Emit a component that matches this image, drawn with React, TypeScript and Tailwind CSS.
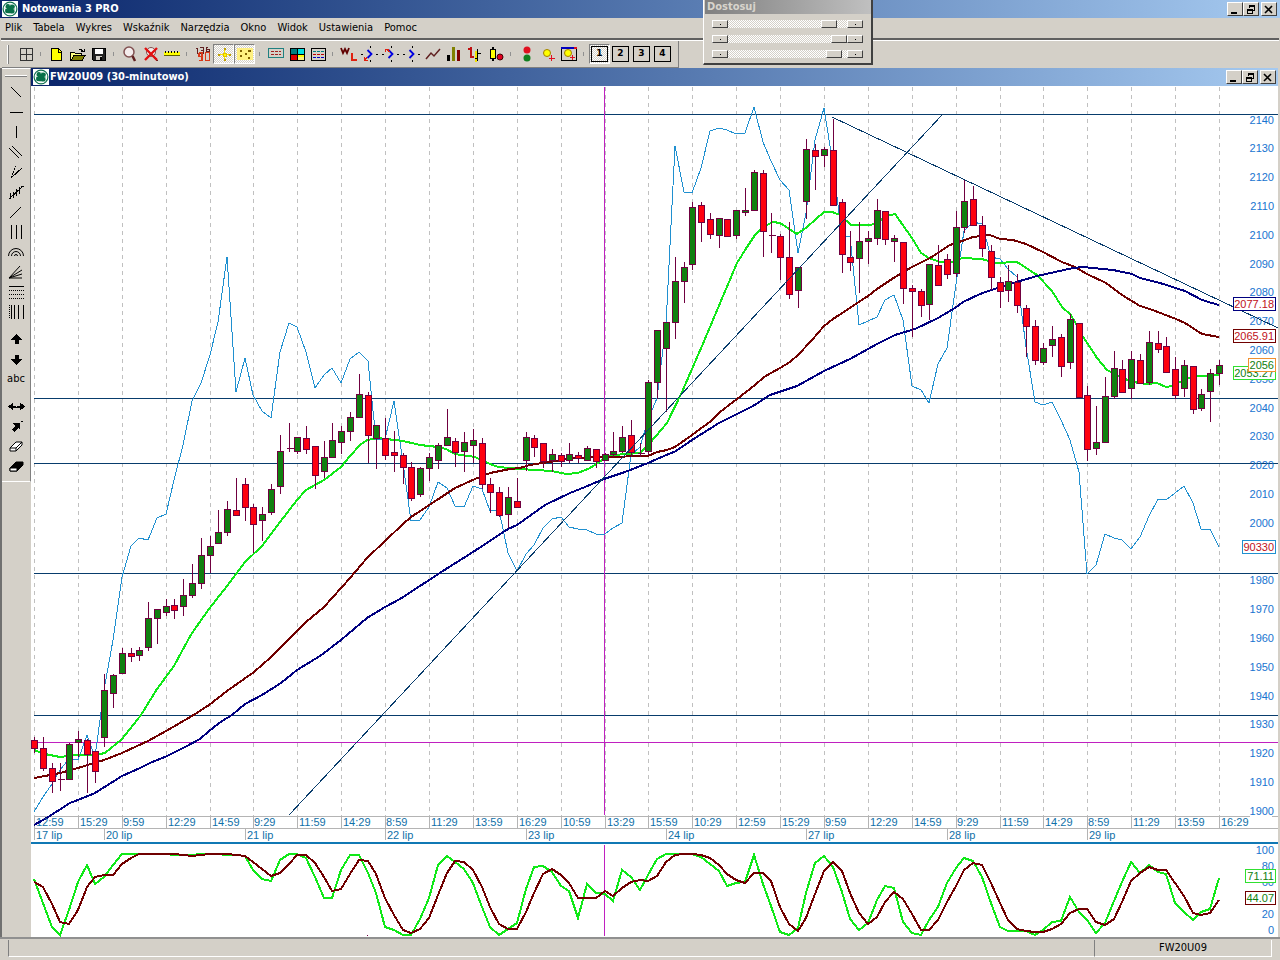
import type { ReactNode } from 'react';

const UI = "font-['DejaVu_Sans_Condensed','DejaVu_Sans','Liberation_Sans',sans-serif]";

const MENU = ['Plik', 'Tabela', 'Wykres', 'Wskaźnik', 'Narzędzia', 'Okno', 'Widok', 'Ustawienia', 'Pomoc'];

/* ---------- chart data ---------- */

const STEP = 1185 / 135;
const px = (i: number) => Math.round(34 + i * STEP);

// high, body top, body bottom, low, direction (1 up, 0 down)
const CANDLES: number[][] = [
  [737, 740, 748, 753, 0], [737, 748, 768, 771, 0], [763, 768, 781, 793, 0], [763, 779, 779, 791, 0], [743, 744, 779, 779, 1],
  [731, 739, 742, 757, 1], [739, 740, 754, 793, 0], [751, 751, 771, 783, 0], [674, 690, 737, 747, 1], [674, 675, 693, 708, 1],
  [648, 653, 673, 673, 1], [648, 653, 656, 662, 0], [647, 650, 655, 661, 1], [602, 618, 647, 651, 1], [609, 609, 618, 644, 1],
  [599, 606, 612, 616, 1], [599, 605, 610, 619, 0], [579, 595, 606, 616, 1], [564, 583, 595, 598, 1], [538, 555, 583, 589, 1],
  [536, 546, 555, 573, 1], [510, 532, 543, 543, 1], [501, 509, 532, 536, 1], [478, 510, 515, 515, 0], [478, 484, 507, 521, 0],
  [504, 507, 524, 553, 0], [507, 514, 520, 541, 1], [484, 489, 512, 515, 1], [435, 451, 486, 494, 1], [423, 448, 448, 452, 0],
  [437, 437, 451, 454, 1], [426, 438, 449, 454, 0], [446, 446, 475, 489, 0], [441, 457, 471, 478, 1], [423, 440, 457, 457, 1],
  [426, 431, 442, 454, 1], [412, 417, 431, 441, 1], [374, 394, 417, 417, 1], [392, 395, 435, 463, 0], [425, 425, 438, 469, 1],
  [418, 438, 455, 460, 0], [431, 452, 455, 472, 0], [453, 455, 467, 484, 0], [462, 467, 498, 501, 0], [467, 468, 494, 497, 1],
  [453, 457, 468, 481, 1], [443, 445, 460, 469, 1], [409, 437, 445, 445, 1], [438, 441, 452, 467, 0], [432, 442, 451, 472, 1],
  [429, 440, 445, 463, 1], [438, 443, 484, 489, 0], [478, 484, 492, 513, 0], [487, 492, 515, 517, 0], [487, 497, 514, 528, 1],
  [478, 501, 507, 507, 0], [432, 437, 460, 471, 1], [435, 438, 447, 457, 0], [443, 443, 461, 468, 0], [449, 454, 460, 472, 1],
  [453, 455, 461, 467, 0], [443, 454, 460, 463, 1], [452, 455, 458, 463, 0], [446, 448, 460, 460, 1], [449, 449, 461, 468, 0],
  [453, 454, 460, 461, 1], [432, 451, 454, 457, 1], [426, 437, 451, 453, 1], [420, 435, 452, 457, 0], [443, 453, 453, 457, 0],
  [380, 382, 451, 455, 1], [330, 330, 382, 399, 1], [322, 322, 348, 412, 1], [257, 281, 322, 339, 1], [262, 267, 281, 303, 1],
  [202, 207, 264, 270, 1], [202, 205, 222, 242, 0], [213, 219, 234, 239, 0], [218, 218, 235, 248, 1], [219, 219, 236, 236, 0],
  [210, 210, 235, 239, 1], [188, 210, 212, 216, 1], [170, 172, 210, 210, 1], [170, 173, 231, 257, 0], [213, 235, 235, 253, 0],
  [234, 236, 257, 280, 0], [222, 257, 294, 299, 0], [267, 267, 290, 308, 1], [139, 149, 201, 219, 1], [144, 150, 156, 190, 0],
  [147, 149, 155, 167, 1], [119, 150, 205, 205, 0], [199, 202, 254, 273, 0], [231, 257, 262, 271, 0], [222, 241, 258, 293, 1],
  [231, 238, 241, 264, 1], [199, 210, 238, 245, 1], [211, 211, 239, 245, 0], [235, 238, 241, 262, 1], [242, 242, 288, 304, 0],
  [285, 288, 291, 337, 0], [289, 291, 305, 317, 0], [264, 264, 304, 320, 1], [245, 265, 285, 285, 0], [254, 259, 274, 279, 0],
  [211, 227, 273, 277, 1], [179, 201, 227, 233, 1], [186, 199, 225, 225, 0], [216, 225, 248, 257, 0], [245, 251, 277, 290, 0],
  [277, 282, 291, 308, 0], [265, 281, 290, 302, 1], [274, 282, 305, 313, 0], [305, 308, 326, 357, 0], [320, 326, 360, 365, 0],
  [343, 348, 362, 365, 1], [326, 339, 345, 357, 1], [334, 337, 366, 377, 0], [314, 319, 362, 369, 1], [323, 323, 397, 397, 0],
  [386, 395, 449, 461, 0], [406, 442, 448, 455, 1], [377, 396, 442, 442, 1], [351, 368, 396, 399, 1], [360, 369, 392, 392, 0],
  [351, 359, 388, 399, 1], [354, 360, 383, 383, 0], [331, 342, 382, 385, 1], [331, 343, 349, 353, 0], [337, 346, 372, 372, 0],
  [357, 369, 395, 399, 0], [360, 365, 388, 397, 1], [366, 366, 409, 414, 0], [389, 394, 408, 411, 1], [369, 373, 391, 422, 1],
  [360, 365, 373, 385, 1],
];

const OPEN_INTEREST = [
  812, 797, 784, 770, 759, 760, 735, 757, 690, 640, 577, 546, 538, 540, 518, 514, 480, 445, 401, 383, 355, 322, 257, 392, 358,
  395, 411, 418, 352, 323, 327, 352, 388, 375, 368, 383, 359, 352, 361, 440, 439, 401, 463, 521, 520, 507, 482, 488, 506, 507,
  486, 489, 511, 510, 553, 571, 554, 545, 528, 519, 517, 527, 529, 530, 534, 534, 528, 523, 455, 447, 420, 398, 325, 146, 192,
  193, 168, 131, 128, 130, 134, 133, 107, 142, 161, 180, 190, 253, 213, 140, 108, 165, 237, 236, 325, 321, 317, 300, 295, 320,
  386, 390, 403, 364, 348, 284, 231, 222, 224, 257, 259, 269, 277, 347, 402, 405, 402, 420, 440, 472, 574, 565, 534, 538, 540,
  549, 537, 516, 499, 500, 493, 486, 503, 529, 529, 547,
];

const STOCH_FAST = [
  879, 903, 927, 935, 910, 882, 865, 884, 877, 865, 854, 854, 854, 854, 854, 854, 855, 855, 855, 854, 854, 854, 855, 855, 856,
  870, 879, 881, 860, 854, 854, 858, 877, 898, 898, 870, 855, 855, 873, 893, 927, 930, 935, 935, 919, 898, 865, 856, 862, 869,
  883, 907, 927, 935, 929, 923, 889, 867, 866, 872, 886, 891, 918, 884, 893, 894, 901, 870, 877, 890, 875, 859, 854, 854, 854,
  854, 857, 864, 871, 886, 883, 882, 855, 884, 906, 932, 935, 928, 893, 863, 856, 867, 892, 919, 930, 923, 900, 886, 888, 922,
  933, 935, 920, 907, 883, 868, 858, 861, 877, 903, 927, 931, 931, 931, 935, 930, 922, 921, 897, 912, 920, 933, 923, 901, 882,
  862, 873, 865, 872, 874, 903, 912, 920, 912, 909, 878,
];

const STOCH_SLOW = [
  882, 887, 904, 922, 924, 910, 887, 877, 875, 875, 864, 858, 854, 854, 854, 854, 854, 855, 856, 855, 854, 854, 854, 855, 856,
  862, 869, 876, 873, 864, 855, 855, 863, 877, 891, 889, 874, 860, 861, 874, 898, 915, 930, 933, 929, 918, 895, 873, 861, 862,
  870, 887, 907, 924, 929, 929, 912, 893, 874, 869, 875, 883, 898, 898, 898, 891, 896, 888, 882, 880, 881, 876, 862, 855, 854,
  854, 855, 858, 865, 874, 880, 883, 873, 873, 881, 907, 924, 931, 918, 894, 871, 862, 871, 893, 913, 924, 917, 902, 892, 899,
  914, 930, 930, 920, 902, 886, 870, 863, 865, 883, 903, 920, 929, 931, 932, 932, 929, 924, 913, 909, 909, 922, 925, 919, 902,
  881, 873, 867, 870, 870, 883, 896, 913, 915, 913, 900,
];

const MA_SHORT =
  '34,750 45,754 60,757 75,755 95,755 105,753 122,739 141,715 157,689 174,666 188,640 192,633 209,609 227,586 245,562 262,546 280,522 297,500 306,490 324,480 341,467 350,456 360,445 367,440 378,438 403,441 420,445 438,447 446,449 455,454 475,457 490,464 498,467 520,469 535,470 552,471 566,474 578,473 590,468 604,459 613,455 640,453 650,443 667,423 682,392 702,346 718,308 737,263 747,247 755,235 763,227 773,222 780,223 797,234 807,227 824,212 832,212 840,215 851,225 870,225 877,223 886,216 895,214 912,238 921,253 929,258 940,262 953,262 962,258 982,259 995,263 1017,262 1037,275 1052,291 1062,307 1071,315 1082,335 1097,358 1107,370 1120,377 1133,382 1147,384 1157,383 1166,387 1173,386 1187,378 1200,376 1219,375';
const MA_MID =
  '34,778 45,776 60,773 78,768 104,760 122,753 148,741 166,731 192,716 209,705 227,691 254,672 270,658 288,640 306,622 324,607 350,578 367,558 385,541 403,524 411,517 440,498 455,488 475,479 490,473 510,469 520,468 530,465 555,461 575,458 604,457 648,456 657,452 667,450 675,447 692,435 711,421 720,412 737,399 755,385 764,377 780,368 790,362 798,355 812,340 824,326 833,319 868,296 877,289 895,277 912,267 930,258 950,245 962,241 973,237 990,235 1000,239 1013,240 1026,244 1043,252 1062,262 1075,267 1087,274 1106,283 1122,295 1140,306 1150,309 1176,319 1185,323 1202,334 1219,337';
const MA_LONG =
  '34,825 45,819 70,803 78,800 95,793 122,776 140,768 150,763 167,756 187,746 200,739 209,731 222,721 232,715 245,704 262,695 281,683 297,670 320,656 341,640 367,618 385,607 400,599 446,569 473,552 508,529 517,525 545,505 570,493 585,487 604,479 625,472 648,463 657,459 676,451 692,440 719,423 737,414 753,406 770,395 797,386 824,371 850,359 877,344 895,335 915,329 938,318 955,308 963,302 980,294 1000,287 1020,281 1037,276 1073,268 1083,267 1093,268 1113,270 1132,274 1140,278 1160,283 1185,291 1202,300 1212,303 1219,305';

const TIMES = [
  '12:59', '15:29', '9:59', '12:29', '14:59', '9:29', '11:59', '14:29', '8:59', '11:29', '13:59', '16:29', '10:59', '13:29',
  '15:59', '10:29', '12:59', '15:29', '9:59', '12:29', '14:59', '9:29', '11:59', '14:29', '8:59', '11:29', '13:59', '16:29',
];
const DAYS: [number, string][] = [
  [0, '17 lip'], [8, '20 lip'], [24, '21 lip'], [40, '22 lip'], [56, '23 lip'], [72, '24 lip'], [88, '27 lip'], [104, '28 lip'], [120, '29 lip'],
];
const PRICES = Array.from({ length: 25 }, (_, i) => 2140 - i * 10).filter((p) => p !== 1990);
const LEVELS = [114, 398, 463, 573, 715];

const series = (ys: number[]) => ys.map((y, i) => `${px(i)},${y}`).join(' ');

function Tag({ x, y, w, stroke, fill, children }: { x: number; y: number; w: number; stroke: string; fill: string; children: string }) {
  return (
    <g>
      <rect x={x + 0.5} y={y + 0.5} width={w} height={13} fill="#fff" stroke={stroke} shapeRendering="crispEdges" />
      <text x={x + w - 1} y={y + 11} fill={fill} textAnchor="end">{children}</text>
    </g>
  );
}

function PriceChart() {
  return (
    <svg viewBox="31 86 1247 756" className="block h-auto w-full bg-white font-['Liberation_Sans',sans-serif] text-[11px]" role="img" aria-label="FW20U09">
      <g shapeRendering="crispEdges" fill="none">
        {TIMES.map((_, k) => (
          <path key={k} d={`M${px(k * 5) + 0.5} 87V816`} stroke="#c0c0c0" strokeDasharray="4 4" />
        ))}
        <path d="M34 816.5H1250M1272 816.5H1278M34 828.5H1278" stroke="#b4b4b4" />
        {TIMES.map((_, k) => (
          <path key={k} d={`M${px(k * 5) + 0.5} 816V828`} stroke="#b4b4b4" />
        ))}
        {DAYS.map(([i]) => (
          <path key={i} d={`M${px(i) + 0.5} 828V840`} stroke="#b4b4b4" />
        ))}
        {LEVELS.map((y) => (
          <path key={y} d={`M34 ${y + 0.5}H1278`} stroke="#083c6c" />
        ))}
        <path d="M34 742.5H1278M604.5 87V815" stroke="#c020c0" />
        <polyline points={series(OPEN_INTEREST)} stroke="#2090d0" />
      </g>
      <g fill="#1874d0" textAnchor="end">
        {PRICES.map((p) => (
          <text key={p} x={1274} y={Math.round(123.5 + (2140 - p) * 2.88)}>{p}</text>
        ))}
      </g>
      <g shapeRendering="crispEdges" fill="none">
        <polyline points={MA_SHORT} stroke="#10e818" strokeWidth={2} />
        <polyline points={MA_MID} stroke="#700000" strokeWidth={2} />
        <polyline points={MA_LONG} stroke="#000080" strokeWidth={2} />
      </g>
      <g shapeRendering="crispEdges" stroke="#700040">
        {CANDLES.map(([hi, top, bottom, lo, up], i) => {
          const x = px(i) + 0.5;
          return (
            <g key={i}>
              <path d={`M${x} ${hi}V${lo}`} />
              {top === bottom ? (
                <path d={`M${x - 3} ${top + 0.5}H${x + 4}`} />
              ) : (
                <rect x={x - 3} y={top + 0.5} width={6} height={bottom - top} fill={up ? '#108010' : '#ff0010'} />
              )}
            </g>
          );
        })}
      </g>
      <path d="M289 815L942 115M832 117L1278 328" fill="none" stroke="#083c6c" shapeRendering="crispEdges" />
      <g fill="#1070a8">
        {TIMES.map((t, k) => (
          <text key={k} x={px(k * 5) + (t.length > 4 ? 2 : 1)} y={826}>{t}</text>
        ))}
        {DAYS.map(([i, d]) => (
          <text key={i} x={px(i) + 2} y={839}>{d}</text>
        ))}
      </g>
      <path d="M34 825L45 819" stroke="#000080" strokeWidth={2} shapeRendering="crispEdges" />
      <Tag x={1233} y={297} w={42} stroke="#000080" fill="#c01020">2077.18</Tag>
      <Tag x={1233} y={329} w={42} stroke="#700000" fill="#c01020">2065.91</Tag>
      <Tag x={1233} y={366} w={42} stroke="#30e030" fill="#108010">2053.27</Tag>
      <Tag x={1248} y={358} w={27} stroke="#f09030" fill="#108010">2056</Tag>
      <Tag x={1242} y={540} w={33} stroke="#2090d0" fill="#c01020">90330</Tag>
    </svg>
  );
}

function StochasticChart() {
  return (
    <svg viewBox="31 844 1247 93" className="block h-auto w-full bg-white font-['Liberation_Sans',sans-serif] text-[11px]" role="img" aria-label="Stochastic">
      <g fill="#1874d0" textAnchor="end">
        <text x={1274} y={854}>100</text>
        <text x={1274} y={870}>80</text>
        <text x={1274} y={886}>60</text>
        <text x={1274} y={918}>20</text>
        <text x={1274} y={934}>0</text>
      </g>
      <g fill="none" shapeRendering="crispEdges">
        <path d="M604.5 845V936" stroke="#c020c0" />
        <path d="M367 935.5h1" stroke="#700040" />
        <polyline points={series(STOCH_FAST)} stroke="#10e818" strokeWidth={2} />
        <polyline points={series(STOCH_SLOW)} stroke="#700000" strokeWidth={2} />
      </g>
      <Tag x={1245} y={869} w={30} stroke="#30e030" fill="#108010">71.11</Tag>
      <Tag x={1245} y={891} w={30} stroke="#700000" fill="#108010">44.07</Tag>
    </svg>
  );
}

/* ---------- icons ---------- */

function Icon({ children, w = 18 }: { children: ReactNode; w?: number }) {
  return (
    <svg width={w} height={18} viewBox={`0 0 ${w} 18`} fill="none" stroke="#000" shapeRendering="crispEdges" aria-hidden="true">
      {children}
    </svg>
  );
}

const signal = (red: string) => (
  <Icon>
    <path d="M6.500 5l4 4-4 4" stroke="#0000e0" strokeWidth={1.800} shapeRendering="auto" />
    <path d="M0 9.500h2M15 9.500h2M9.500 1v2M9.500 15v2" />
    <path d={red} stroke="#e02010" />
  </Icon>
);
const windowNo = (n: string) => (
  <span className="flex h-4 w-[17px] items-start justify-center border border-black pt-px font-['DejaVu_Sans',sans-serif] text-[9px] leading-[11px] font-bold">{n}</span>
);

type Tool = { label: string; icon: ReactNode; on?: boolean };

const TOOLBAR: Tool[][] = [
  [{ label: 'Okna', icon: <Icon><path d="M3.500 3.500h12v12h-12zM9.500 3v12M3 9.500h12" stroke="#333" /></Icon> }],
  [
    { label: 'Nowy', icon: <Icon><path d="M3.500 3.500h7l3 3v9h-10z" fill="#ffff00" /><path d="M10.500 3v4h3" /></Icon> },
    { label: 'Otwórz', icon: <Icon><path d="M1.500 15.500v-8h4l1 1h6v2" fill="#ffff80" /><path d="M2 15.500l3-5h11l-3 5z" fill="#808000" /><path d="M10 4.500h2l2 2M12 6.500h3v-3" /></Icon> },
    { label: 'Zapisz', icon: <Icon><path d="M2.500 3.500h13v12h-12l-1-1z" fill="#222" /><rect x="5" y="4" width="8" height="5" fill="#fff" stroke="none" /><rect x="6" y="11" width="6" height="4" fill="#d4d0c8" stroke="none" /><rect x="10" y="12" width="2" height="3" fill="#000" stroke="none" /></Icon> },
  ],
  [
    { label: 'Powiększ', icon: <Icon><circle cx="8" cy="7" r="5" fill="#f4ecec" stroke="#805050" strokeWidth={1.500} shapeRendering="auto" /><path d="M11.500 11l2.500 5" stroke="#602020" strokeWidth={2.500} shapeRendering="auto" /></Icon> },
    { label: 'Cofnij powiększenie', icon: <Icon><circle cx="9" cy="7" r="4.500" fill="#f4ecec" stroke="#805050" shapeRendering="auto" /><path d="M12 11l3 5" stroke="#602020" strokeWidth={2} /><path d="M3 3l12 12M15 3L3 15" stroke="#e01010" strokeWidth={2.400} shapeRendering="auto" /></Icon> },
    { label: 'Linijka', icon: <Icon><rect x="1" y="7" width="16" height="4" fill="#ffff00" stroke="none" /><path d="M2.500 6v2M5.500 6v2M8.500 6v2M11.500 6v2M14.500 6v2" /><path d="M1 10.500h16" stroke="#606000" /></Icon> },
  ],
  [
    {
      label: 'Wartości',
      icon: (
        <Icon>
          <path d="M2 3.500h1.500v5M6 2.500h3v2.500h-2.500M9 5v3.500h-3M14 2.500h-2v4h3v-2h-3" stroke="#602020" />
          <path d="M5 7.500h3v8h-3M5 7.500v4h3M11.500 7.500h4v8h-4z" stroke="#d83818" strokeWidth={1.500} />
        </Icon>
      ),
    },
    { label: 'Kursor', on: true, icon: <Icon><path d="M9.500 5v9M5 9.500h9" stroke="#ffe000" strokeWidth={1} /><path d="M8 8h3v3h-3z" fill="#ffff00" stroke="#e0c000" /><path d="M9.500 3v2M9.500 14v2M3 9.500h2M14 9.500h2" stroke="#c0a000" strokeWidth={2} /></Icon> },
    { label: 'Punkty', on: true, icon: <Icon><path d="M1 3h16v12H1z" fill="#fff080" stroke="none" /><path d="M4 6h2M12 6h3M9 9h2M4 11h2M12 13h2" stroke="#806000" strokeWidth={2} /></Icon> },
  ],
  [
    { label: 'Opis', icon: <Icon><path d="M1.500 3.500h15v9h-15z" stroke="#208080" /><path d="M4 6.500h10M4 9.500h10" stroke="#a02020" strokeDasharray="3 1" /></Icon> },
    { label: 'Kolory', icon: <Icon><path d="M2.500 3.500h14v12h-14z" fill="#fff" /><path d="M3 4h7v5H3z" fill="#008080" stroke="none" /><path d="M10 4h6v5h-6z" fill="#00e0e0" stroke="none" /><path d="M3 10h6v5H3z" fill="#e00000" stroke="none" /><path d="M9 10h7v2H9z" fill="#ffff00" stroke="none" /><path d="M9 12h7v3h-7z" fill="#fff080" stroke="none" /><path d="M3 9.500h13M9.500 4v11" /></Icon> },
    { label: 'Lista', icon: <Icon><path d="M2.500 3.500h14v12h-14z" /><path d="M4 6.500h11" stroke="#008080" strokeDasharray="3 1" /><path d="M4 9.500h11" stroke="#c00000" strokeDasharray="3 1" /><path d="M4 12.500h11" stroke="#0000c0" strokeDasharray="3 1" /></Icon> },
  ],
  [
    { label: 'WL', icon: <Icon><path d="M1 3l2 5 2-4 2 4 2-5" stroke="#600000" strokeWidth={1.800} shapeRendering="auto" /><path d="M12 8v7h5" stroke="#e02010" strokeWidth={2} /></Icon> },
    { label: 'Sygnał 1', icon: signal('M3 15.500l3-3M3.500 12v3h3') },
    { label: 'Sygnał 2', icon: signal('M4 4l4 3M3.500 7v-3h3') },
    { label: 'Sygnał 3', icon: signal('') },
    { label: 'Liniowy', icon: <Icon><path d="M2 14l5-6 3 3 6-7" stroke="#602020" strokeWidth={1.500} shapeRendering="auto" /></Icon> },
    { label: 'Słupkowy', icon: <Icon><path d="M2 10h3v6H2z" fill="#000" stroke="none" /><path d="M7 2h3v14H7z" fill="#808000" stroke="none" /><path d="M12 5h3v11h-3z" fill="#800000" stroke="none" /></Icon> },
    { label: 'Barowy', icon: <Icon><path d="M5 2v11M2 3.500h3M5 11.500h3" stroke="#c01010" strokeWidth={2} /><path d="M9.500 6v11" stroke="#f0e000" strokeWidth={2} /><path d="M11.500 4v12M9 13.500h3M12 8.500h3" /></Icon> },
    { label: 'Świecowy', icon: <Icon><path d="M5.500 2v14" strokeWidth={2} /><path d="M3.500 4.500h5v9h-5z" fill="#ffff00" /><circle cx="13" cy="12" r="3" fill="#e00020" stroke="#400" shapeRendering="auto" /></Icon> },
  ],
  [
    { label: 'Światła', icon: <Icon><g shapeRendering="auto" stroke="none"><circle cx="9" cy="5" r="3.500" fill="#e01020" /><circle cx="9" cy="13" r="3.500" fill="#108020" /></g></Icon> },
    { label: 'Dodaj punkt', icon: <Icon><circle cx="8" cy="8" r="3.500" fill="#ffff00" stroke="#a08000" shapeRendering="auto" /><path d="M12.500 10v6M10 13.500h6" stroke="#e01020" /></Icon> },
    { label: 'Dodaj okno', icon: <Icon><path d="M1.500 2.500h15v13h-15z" /><path d="M1 3h13" stroke="#0000c0" strokeWidth={2} /><path d="M14 3h3" stroke="#e01020" strokeWidth={2} /><circle cx="8" cy="8" r="3.500" fill="#ffff00" stroke="#a08000" shapeRendering="auto" /><path d="M12.500 10v5M10 12.500h5" stroke="#e01020" /></Icon> },
  ],
  [
    { label: 'Ekran 1', icon: windowNo('1'), on: true },
    { label: 'Ekran 2', icon: windowNo('2') },
    { label: 'Ekran 3', icon: windowNo('3') },
    { label: 'Ekran 4', icon: windowNo('4') },
  ],
];

const DRAW_TOOLS: Tool[][] = [
  [
    { label: 'Linia ukośna', icon: <Icon><path d="M4 4l10 10" /></Icon> },
    { label: 'Linia pozioma', icon: <Icon><path d="M3 9.500h13" /></Icon> },
    { label: 'Linia pionowa', icon: <Icon><path d="M9.500 3v12" /></Icon> },
    { label: 'Linie równoległe', icon: <Icon><path d="M2 5l10 10M5 3l10 10" /></Icon> },
    { label: 'Widły', icon: <Icon><path d="M4 15l5-12" strokeDasharray="2 1" /><path d="M4 15l11-10" /></Icon> },
    { label: 'Regresja', icon: <Icon><path d="M2 16l13-12" /><path d="M3.500 10v6M6.500 9v6M9.500 6v7M12.500 4v7M14 3.500h3" /></Icon> },
    { label: 'Linia trendu', icon: <Icon><path d="M3 15L14 4" /></Icon> },
    { label: 'Linie cyklu', icon: <Icon><path d="M4.500 2v14M9.500 2v14M14.500 2v14" /></Icon> },
    { label: 'Łuki', icon: <Icon><g shapeRendering="auto"><path d="M1.500 13a7.500 7.500 0 0 1 15 0M4.500 13a4.500 4.500 0 0 1 9 0M7.500 13a1.500 1.500 0 0 1 3 0" /></g></Icon> },
    { label: 'Wachlarz', icon: <Icon><path d="M2 15L13 3M2 15l13-8M2 15l13-4M2 15h13" shapeRendering="auto" /></Icon> },
    { label: 'Poziomy', icon: <Icon><path d="M2 3.500h15" /><path d="M2 7.500h15M2 11.500h15M2 15.500h15" strokeDasharray="1 1" /></Icon> },
    { label: 'Strefy', icon: <Icon><path d="M2.500 2v14" strokeDasharray="1 1" /><path d="M4.500 2v14M7.500 2v14M11.500 2v14M16.500 2v14" /></Icon> },
  ],
  [
    { label: 'Strzałka w górę', icon: <Icon><path d="M9.500 4l6 6h-4v4h-4v-4h-4z" fill="#000" stroke="none" /></Icon> },
    { label: 'Strzałka w dół', icon: <Icon><path d="M9.500 15l6-6h-4V5h-4v4h-4z" fill="#000" stroke="none" /></Icon> },
    { label: 'Tekst', icon: <span className="text-[11px]">abc</span> },
  ],
  [
    { label: 'Rozciągnij', icon: <Icon><path d="M1 9.500l5-4v3h7v-3l5 4-5 4v-3H6v3z" fill="#000" stroke="none" /><path d="M9 9.500h1" stroke="#d4d0c8" /></Icon> },
    { label: 'Przesuń', icon: <Icon><path d="M6 6h7v7l-2-2-4 4-2-2 3-4z" fill="#000" stroke="none" /><path d="M14 4h2" /></Icon> },
    { label: 'Gumka', icon: <Icon><g shapeRendering="auto"><path d="M3 11l6-6h6v3l-6 6H3z" fill="#fff" /><path d="M3 11h6l6-6M9 11v3" /></g></Icon> },
    { label: 'Usuń wszystko', icon: <Icon><g shapeRendering="auto"><path d="M3 11l6-6h7v3l-6 6H3z" fill="#000" /><path d="M3 11h7v3H3z" fill="#fff" /></g></Icon> },
  ],
];

function Logo() {
  return (
    <svg width="16" height="16" viewBox="0 0 16 16" className="shrink-0 bg-white" aria-hidden="true">
      <circle cx="8" cy="8" r="6.900" fill="#fff" stroke="#107050" strokeWidth="1.200" />
      <g fill="#087048">
        <circle cx="8" cy="8" r="4.600" />
        <circle cx="5.800" cy="5.200" r="2.200" />
        <circle cx="10.600" cy="5.600" r="2.200" />
        <circle cx="5.200" cy="10" r="2.200" />
        <circle cx="10.400" cy="10.400" r="2.200" />
      </g>
      <path d="M8 2.500v2M2.500 7.500h2M13.500 8h-2M8 13.500v-1.500" stroke="#d0e8dc" />
    </svg>
  );
}

const RAISED = 'border border-t-white border-l-white border-r-[#404040] border-b-[#404040] bg-[#d4d0c8]';

function WindowButtons() {
  const btn = `flex h-[14px] w-4 items-center justify-center ${RAISED}`;
  return (
    <div className="ml-auto flex">
      <button type="button" aria-label="Minimalizuj" className={btn}>
        <svg width="12" height="11" viewBox="0 0 12 11" shapeRendering="crispEdges"><path d="M2 8h6v2H2z" /></svg>
      </button>
      <button type="button" aria-label="Przywróć" className={btn}>
        <svg width="12" height="11" viewBox="0 0 12 11" fill="none" stroke="#000" shapeRendering="crispEdges"><path d="M4.500 4V1.500h5v5H8M4 2h6M2.500 5.500h5v4h-5zM2 6h6" /></svg>
      </button>
      <button type="button" aria-label="Zamknij" className={`${btn} ml-[2px]`}>
        <svg width="12" height="11" viewBox="0 0 12 11" stroke="#000" strokeWidth="1.600"><path d="M2 2l7 7M9 2L2 9" /></svg>
      </button>
    </div>
  );
}

const HATCH = 'bg-[repeating-conic-gradient(#fff_0_25%,#d4d0c8_0_50%)] bg-[length:2px_2px]';

function Adjuster() {
  const arrow = `flex h-2 w-4 shrink-0 items-center justify-center ${RAISED}`;
  return (
    <section className="absolute top-0 left-[703px] h-[65px] w-[170px] border-r-2 border-b-2 border-l border-r-[#404040] border-b-[#404040] border-l-white bg-[#d4d0c8]">
      <h2 className="ml-px h-[14px] bg-linear-to-r from-[#808080] to-[#c0c0c0] px-[2px] text-[11px] leading-[14px] font-bold text-[#d8d4cc]">Dostosuj</h2>
      <div className="flex flex-col gap-[7px] px-2 pt-[6px]">
        {[90, 100, 95].map((v, i) => (
          <div key={v} className="flex">
            <button type="button" aria-label="Mniej" className={arrow}><span className="size-px bg-black" /></button>
            <input
              type="range"
              aria-label={`Suwak ${i + 1}`}
              defaultValue={v}
              className={`h-2 min-w-0 flex-1 appearance-none ${HATCH} [&::-webkit-slider-thumb]:h-2 [&::-webkit-slider-thumb]:w-4 [&::-webkit-slider-thumb]:appearance-none [&::-webkit-slider-thumb]:border [&::-webkit-slider-thumb]:border-t-white [&::-webkit-slider-thumb]:border-r-[#404040] [&::-webkit-slider-thumb]:border-b-[#404040] [&::-webkit-slider-thumb]:border-l-white [&::-webkit-slider-thumb]:bg-[#d4d0c8]`}
            />
            <button type="button" aria-label="Więcej" className={arrow}><span className="size-px bg-black" /></button>
          </div>
        ))}
      </div>
    </section>
  );
}

const TITLE = 'flex h-[18px] items-center bg-linear-to-r from-[#0a246a] to-[#a6caf0] text-[11px] font-bold text-white';

export default function App() {
  return (
    <div className={`relative flex min-h-screen flex-col bg-[#d4d0c8] text-[11px] text-black ${UI}`}>
      <header className={`${TITLE} gap-1 pr-[3px] pl-[2px]`}>
        <Logo />
        <h1>Notowania 3 PRO</h1>
        <WindowButtons />
      </header>

      <nav className="flex h-5 items-center gap-[11px] px-[5px]">
        {MENU.map((m) => (
          <button type="button" key={m}>{m}</button>
        ))}
      </nav>

      <div className="mx-px h-[3px] border-t-2 border-b border-t-[#606060] border-b-white" />

      <div className="flex h-[27px] pl-[2px]">
        <div className="flex items-center border-r border-b border-[#808080] pr-[5px]" role="toolbar" aria-label="Pasek narzędzi">
          <span className="mr-[6px] ml-[5px] h-[19px] w-[2px] border-r border-l border-r-[#808080] border-l-white" />
          {TOOLBAR.map((group, g) => (
            <div key={g} className="flex items-center">
              {g > 0 && <span className="mr-[5px] ml-1 h-1 w-px bg-[#909090]" />}
              {group.map((t) => (
                <button
                  type="button"
                  key={t.label}
                  aria-label={t.label}
                  className={`flex h-5 w-[21px] items-center justify-center ${t.on ? `border border-t-[#808080] border-r-white border-b-white border-l-[#808080] ${HATCH}` : ''}`}
                >
                  {t.icon}
                </button>
              ))}
            </div>
          ))}
        </div>
      </div>

      <main className="flex pr-[2px]">
        <aside className="w-[31px] shrink-0 border-l-2 border-l-[#707070]">
          <div className="flex flex-col items-center border-t border-r border-b border-t-white border-r-[#808080] border-b-white pb-[5px]">
            <span className="mt-[6px] mb-[5px] h-[2px] w-[22px] border-t border-b border-t-white border-b-[#808080]" />
            {DRAW_TOOLS.map((group, g) => (
              <div key={g} className="mb-[7px] flex flex-col last:mb-0">
                {group.map((t) => (
                  <button type="button" key={t.label} aria-label={t.label} className="flex h-5 w-6 items-center justify-center">
                    {t.icon}
                  </button>
                ))}
              </div>
            ))}
          </div>
        </aside>
        <section className="min-w-0 flex-1">
          <div className={`${TITLE} gap-px pr-[2px] pl-[2px]`}>
            <Logo />
            <h2>FW20U09 (30-minutowo)</h2>
            <WindowButtons />
          </div>
          <PriceChart />
          <div className="h-[2px] bg-[#1078b4]" />
          <StochasticChart />
        </section>
      </main>

      <footer className="flex min-h-[23px] flex-1 border-t-2 border-t-[#909090] px-2 pt-px pb-[3px]">
        <div className="flex-1 border-b border-l border-b-white border-l-[#808080]" />
        <div className="w-[178px] border-r border-b border-l border-r-white border-b-white border-l-[#808080] text-center leading-[16px]">FW20U09</div>
      </footer>

      <Adjuster />
    </div>
  );
}
